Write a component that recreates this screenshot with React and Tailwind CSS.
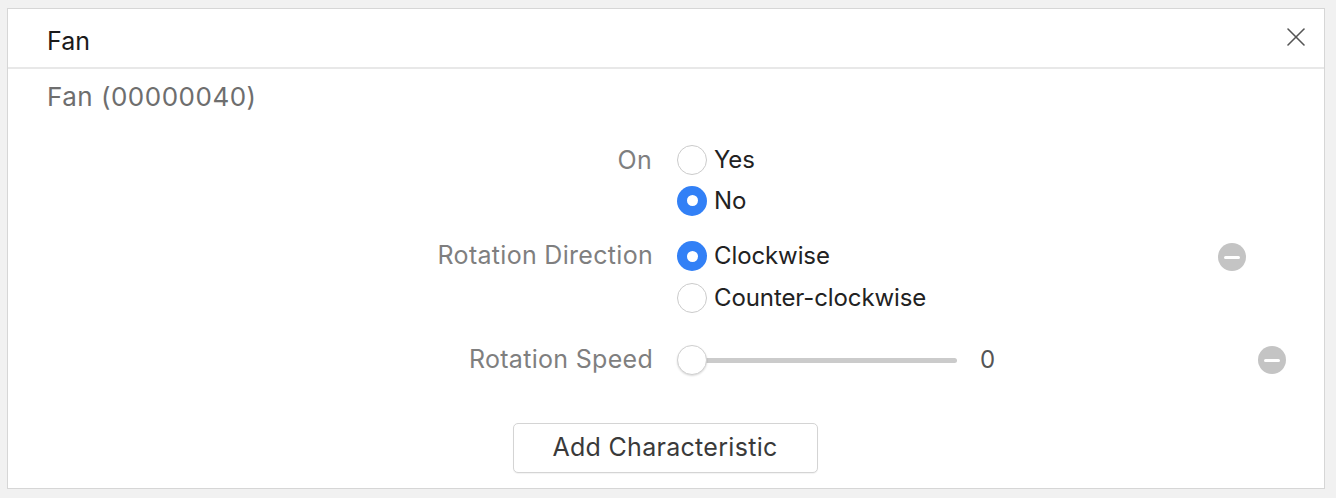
import { X } from 'lucide-react';

function Radio({ checked, label, h = 'h-[41px]' }) {
  return (
    <div className={`flex items-center ${h}`}>
      {checked ? (
        <div className="w-[30px] h-[30px] rounded-full bg-[#3280f6] flex items-center justify-center">
          <div className="w-[11px] h-[11px] rounded-full bg-white" />
        </div>
      ) : (
        <div className="w-[30px] h-[30px] rounded-full border-[1.5px] border-[#cbcbcb] bg-white" />
      )}
      <span className="ml-[7px] text-[24px] tracking-[-0.1px] text-[#222]">{label}</span>
    </div>
  );
}

function MinusButton() {
  return (
    <div className="w-[28px] h-[28px] rounded-full bg-[#c4c4c4] flex items-center justify-center">
      <div className="w-[16px] h-[3px] rounded-full bg-white" />
    </div>
  );
}

export default function App() {
  return (
    <div className="w-[1336px] h-[498px] bg-[#f1f1f1] pt-[8px] pl-[7px]" style={{ fontFamily: 'Inter, "Liberation Sans", sans-serif' }}>
      <div className="w-[1318px] h-[481px] bg-white border border-[#d6d6d6] flex flex-col">
        {/* Header */}
        <div className="h-[60px] border-b-2 border-[#e8e8e8] flex items-center justify-between pl-[39px] pr-[12px]">
          <span className="text-[25px] text-[#1a1a1a] mt-[7px]">Fan</span>
          <X size={32} strokeWidth={1.2} className="text-[#555] -mt-[2px]" />
        </div>

        <div className="pl-[39px] pt-[8px] text-[26px] tracking-[0.5px] text-[#6e6e6e]">Fan (00000040)</div>

        {/* Characteristics */}
        <div className="flex flex-col mt-[23px]">
          <div className="flex">
            <div className="w-[645px] pr-[1px] h-[41px] flex items-center justify-end text-[25px] tracking-[0.3px] text-[#7f7f7f] pt-[3px]">On</div>
            <div className="ml-[24px] flex flex-col">
              <Radio label="Yes" />
              <Radio checked label="No" />
            </div>
          </div>

          <div className="flex mt-[14px]">
            <div className="w-[645px] h-[42px] flex items-center justify-end text-[25px] tracking-[0.3px] text-[#7f7f7f]">Rotation Direction</div>
            <div className="ml-[24px] w-[541px] flex flex-col">
              <Radio checked label="Clockwise" h="h-[42px]" />
              <Radio label="Counter-clockwise" h="h-[42px]" />
            </div>
            <div className="h-[42px] flex items-center pt-[2px]">
              <MinusButton />
            </div>
          </div>

          <div className="flex mt-[20px] items-center h-[42px]">
            <div className="w-[645px] flex justify-end text-[25px] tracking-[0.3px] text-[#7f7f7f]">Rotation Speed</div>
            <div className="ml-[24px] w-[581px] flex items-center">
              <div className="relative w-[282px] h-[30px] flex items-center">
                <div className="ml-[26px] w-[254px] h-[5px] rounded-full bg-[#cbcbcb]" />
                <div className="absolute left-0 top-0 w-[30px] h-[30px] rounded-full bg-white border border-[#d0d0d0] shadow-[0_1px_2px_rgba(0,0,0,0.15)]" />
              </div>
              <span className="ml-[21px] text-[24px] text-[#555]">0</span>
            </div>
            <MinusButton />
          </div>

          <div className="flex justify-center mt-[42px] pr-[2px]">
            <button className="w-[305px] h-[50px] rounded-[5px] border border-[#d4d4d4] bg-white text-[25px] tracking-[0.3px] text-[#3a3a3a] shadow-[0_1px_1px_rgba(0,0,0,0.05)]">
              Add Characteristic
            </button>
          </div>
        </div>
      </div>
    </div>
  );
}
